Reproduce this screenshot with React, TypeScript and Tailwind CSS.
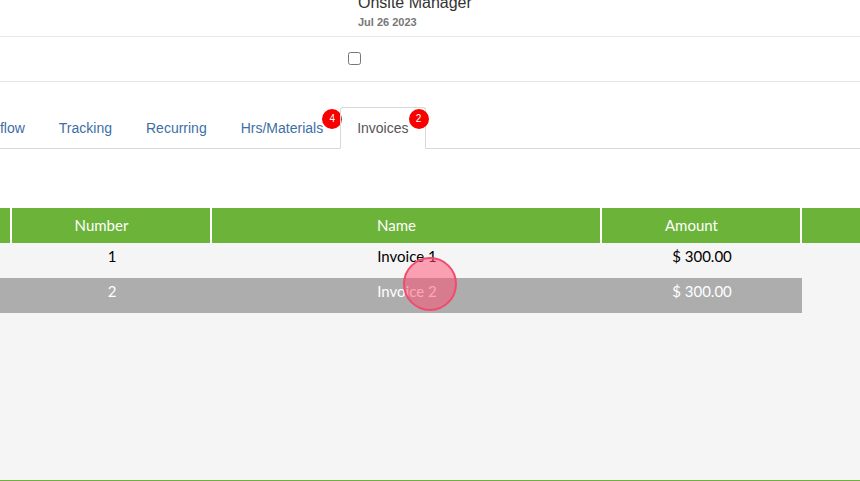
const TABS = ['Workflow', 'Tracking', 'Recurring', 'Hrs/Materials']

const COLS = 'grid grid-cols-[10px_2px_198px_2px_388px_2px_198px_2px_1fr]'

function Badge({ count, className }: { count: number; className: string }) {
  return (
    <span className={`absolute top-[1px] flex h-5 w-5 items-center justify-center rounded-full bg-[#f80000] pb-[1px] text-[10px] leading-none text-white ${className}`}>
      {count}
    </span>
  )
}

export default function App() {
  return (
    <div className="relative h-[481px] w-[860px] overflow-hidden bg-white font-['Liberation_Sans',sans-serif] text-[#333]">
      {/* header row, cut off by the top of the page */}
      <div className="flex h-[37px] flex-col border-b border-[#e7e7e7] pl-[358px]">
        <div className="-mt-[6px] text-base leading-[18px]">Onsite Manager</div>
        <div className="mt-[4px] text-[11px] font-bold leading-[13px] text-[#777]">Jul 26 2023</div>
      </div>

      {/* checkbox row */}
      <div className="flex h-[45px] items-center border-b border-[#e7e7e7] pb-[2px] pl-[348px]">
        <input type="checkbox" className="m-0 h-[13px] w-[13px]" />
      </div>

      {/* tabs */}
      <div className="mt-[25px] flex h-[42px] border-b border-[#d8d8d8] text-sm leading-5">
        <div className="-ml-[49.5px] flex">
          {TABS.map((tab) => (
            <a key={tab} className="relative border border-transparent px-4 pt-[10px] text-[#3d6fa5]">
              {tab}
              {tab === 'Hrs/Materials' && <Badge count={4} className="right-[-3px]" />}
            </a>
          ))}
          <a className="relative h-[42px] rounded-t-[3px] border border-b-white border-[#d8d8d8] px-4 pt-[10px] text-[#555]">
            Invoices
            <Badge count={2} className="right-[-4px]" />
          </a>
        </div>
      </div>

      {/* invoices table */}
      <div className="mt-[59px] h-[273px] border-b border-[#6cb33a] bg-[#f5f5f5] font-['Lato',sans-serif] text-[15px]">
        <div className={`${COLS} h-[35px] bg-[#6cb33a] leading-[35px] text-white`}>
          <div />
          <div className="bg-white" />
          <div className="pr-[19px] text-center">Number</div>
          <div className="bg-white" />
          <div className="pr-[19px] text-center">Name</div>
          <div className="bg-white" />
          <div className="pr-[19px] text-center">Amount</div>
          <div className="bg-white" />
          <div />
        </div>
        <div className={`${COLS} h-[35px] pt-[3px] leading-5 text-black`}>
          <div />
          <div />
          <div className="pl-[2px] text-center">1</div>
          <div />
          <div className="pl-[2px] text-center">Invoice 1</div>
          <div />
          <div className="pl-[2px] text-center">$ 300.00</div>
        </div>
        <div className={`${COLS} h-[35px] w-[802px] bg-[#adadad] pt-[3px] leading-5 text-white`}>
          <div />
          <div />
          <div className="pl-[2px] text-center">2</div>
          <div />
          <div className="pl-[2px] text-center">Invoice 2</div>
          <div />
          <div className="pl-[2px] text-center">$ 300.00</div>
        </div>
      </div>

      {/* click marker from the screen recording */}
      <div className="absolute left-[403px] top-[257px] h-[54px] w-[54px] rounded-full border-2 border-[#f24a6c] bg-[#ff4b6e]/50" />
    </div>
  )
}
